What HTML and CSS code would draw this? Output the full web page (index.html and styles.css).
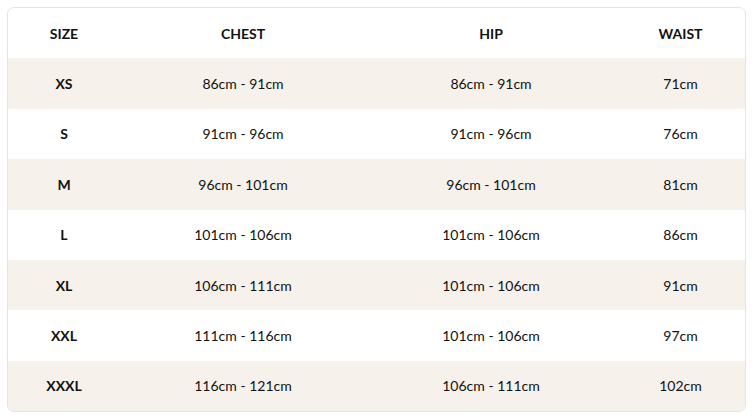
FILE: index.html
```html
<!DOCTYPE html>
<html>
<head>
<meta charset="utf-8">
<link rel="stylesheet" href="styles.css">
</head>
<body>
<div class="card">
  <div class="row head"><div>SIZE</div><div>CHEST</div><div>HIP</div><div>WAIST</div></div>
  <div class="row alt"><div class="sz">XS</div><div>86cm - 91cm</div><div>86cm - 91cm</div><div>71cm</div></div>
  <div class="row"><div class="sz">S</div><div>91cm - 96cm</div><div>91cm - 96cm</div><div>76cm</div></div>
  <div class="row alt"><div class="sz">M</div><div>96cm - 101cm</div><div>96cm - 101cm</div><div>81cm</div></div>
  <div class="row"><div class="sz">L</div><div>101cm - 106cm</div><div>101cm - 106cm</div><div>86cm</div></div>
  <div class="row alt"><div class="sz">XL</div><div>106cm - 111cm</div><div>101cm - 106cm</div><div>91cm</div></div>
  <div class="row"><div class="sz">XXL</div><div>111cm - 116cm</div><div>101cm - 106cm</div><div>97cm</div></div>
  <div class="row alt"><div class="sz">XXXL</div><div>116cm - 121cm</div><div>106cm - 111cm</div><div>102cm</div></div>
</div>
</body>
</html>
```
FILE: styles.css
```css
html, body { margin: 0; padding: 0; background: #fff; }
body { padding: 7px; font-family: Lato, "Open Sans", sans-serif; font-size: 14px; color: #111; }
.card {
  border: 1px solid #e4e4e4;
  border-radius: 7px;
  overflow: hidden;
  height: 403px;
  display: grid;
  grid-template-rows: repeat(8, 1fr);
}
.row {
  display: grid;
  grid-template-columns: 112px 246px 250px 1fr;
  align-items: center;
  text-align: center;
}
.row.alt { background: #f6f1eb; }
.head { font-weight: 700; }
.sz { font-weight: 700; }
```
